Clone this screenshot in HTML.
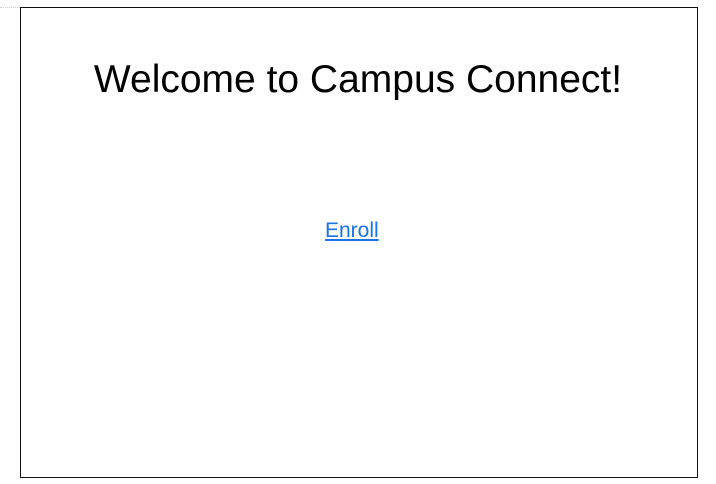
<!DOCTYPE html>
<html><head><meta charset="utf-8"><style>
html,body{margin:0;padding:0;background:#fff;width:716px;height:484px;overflow:hidden}
body{position:relative;font-family:"Liberation Sans",Arial,sans-serif}
.dots{position:absolute;left:0;top:7px;width:20px;border-top:1px dotted #ccc}
.box{position:absolute;left:20px;top:7px;width:676px;height:469px;border:1px solid #111}
h1{position:absolute;left:0;right:0;top:57px;margin:0;text-align:center;font-weight:normal;font-size:39px;line-height:45px;color:#000}
a{position:absolute;left:325px;top:218px;font-size:21px;line-height:26px;color:#1a73e8;text-decoration:underline}
</style></head><body>
<div class="dots"></div>
<div class="box"></div>
<h1>Welcome to Campus Connect!</h1>
<a>Enroll</a>
</body></html>
